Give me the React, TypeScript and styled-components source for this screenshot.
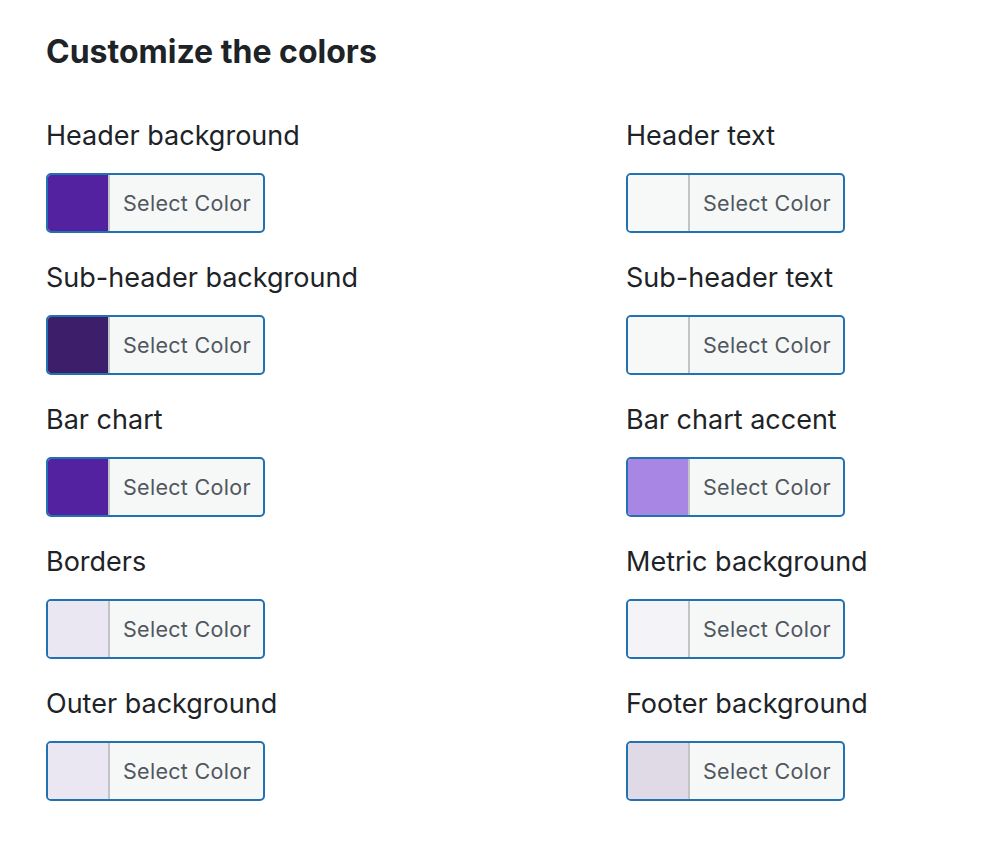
import React from 'react';
import styled, { createGlobalStyle } from 'styled-components';

const GlobalStyle = createGlobalStyle`
  body {
    margin: 0;
    background: #ffffff;
    font-family: Inter, "Noto Sans", sans-serif;
    color: #1d2327;
  }
`;

const COLORS = [
  { label: 'Header background', color: '#5322a1' },
  { label: 'Header text', color: '#f7f8f8' },
  { label: 'Sub-header background', color: '#3d1e6b' },
  { label: 'Sub-header text', color: '#f7f8f8' },
  { label: 'Bar chart', color: '#5322a1' },
  { label: 'Bar chart accent', color: '#a887e4' },
  { label: 'Borders', color: '#ebe7f2' },
  { label: 'Metric background', color: '#f4f3f8' },
  { label: 'Outer background', color: '#ebe7f2' },
  { label: 'Footer background', color: '#e0dae6' },
];

const App = () => {
  return (
    <Wrapper>
      <GlobalStyle />
      <Title>Customize the colors</Title>
      <FieldGrid>
        {COLORS.map((item) => (
          <Field key={item.label}>
            <FieldLabel>{item.label}</FieldLabel>
            <PickerButton type='button'>
              <Swatch $color={item.color} />
              <PickerText>Select Color</PickerText>
            </PickerButton>
          </Field>
        ))}
      </FieldGrid>
    </Wrapper>
  );
};

export default App;

const Wrapper = styled.div`
  padding: 30px 46px 40px;
`;

const Title = styled.h2`
  margin: 0 0 44px;
  font-size: 32px;
  line-height: 44px;
  font-weight: 700;
  color: #1d2327;
`;

const FieldGrid = styled.div`
  display: grid;
  grid-template-columns: 580px 1fr;
  row-gap: 27px;
`;

const Field = styled.div`
  display: flex;
  flex-direction: column;
  align-items: flex-start;
`;

const FieldLabel = styled.label`
  font-size: 27px;
  line-height: 36px;
  color: #1d2327;
  margin-bottom: 19px;
`;

const PickerButton = styled.button`
  display: flex;
  align-items: stretch;
  width: 219px;
  height: 60px;
  padding: 0;
  border: 2px solid #2271b1;
  border-radius: 5px;
  background: #f6f7f7;
  overflow: hidden;
  cursor: pointer;
  font-family: inherit;
`;

const Swatch = styled.span<{ $color: string }>`
  width: 60px;
  flex: none;
  background: ${({ $color }) => $color};
  border-right: 2px solid #c3c4c7;
`;

const PickerText = styled.span`
  flex: 1;
  display: flex;
  align-items: center;
  padding-left: 13px;
  font-size: 21.5px;
  color: #50575e;
  letter-spacing: 0.3px;
`;
